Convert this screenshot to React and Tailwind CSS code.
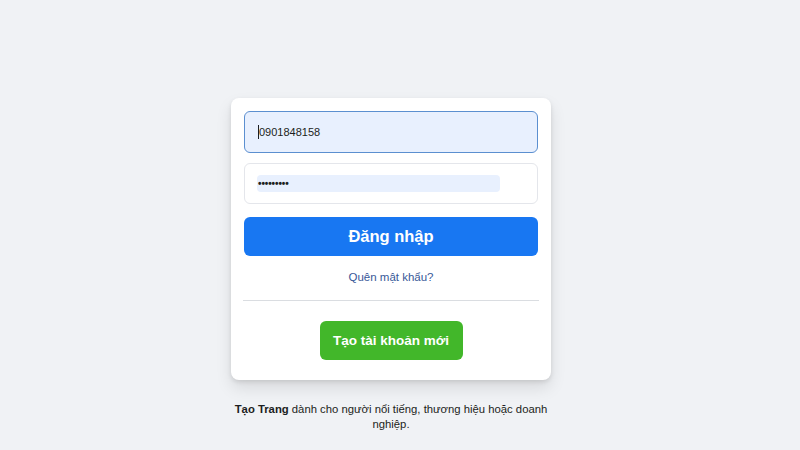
export default function App() {
  return (
    <div
      className="w-[800px] h-[450px] bg-[#f0f2f5] flex flex-col items-center pt-[98px] pr-[18px]"
      style={{ fontFamily: '"Liberation Sans", Arial, sans-serif' }}
    >
      <div className="w-[320px] bg-white rounded-[8px] shadow-[0_2px_4px_rgba(0,0,0,0.1),0_8px_16px_rgba(0,0,0,0.1)] px-[13px] pt-[13px] pb-[20px] flex flex-col">
        <div className="h-[42px] rounded-[6px] border border-[#5b8fd0] bg-[#e8f0fe] flex items-center px-[13px]">
          <span className="w-px h-[14px] bg-[#1c1e21]" />
          <span className="text-[11px] text-[#1c1e21]">0901848158</span>
        </div>
        <div className="mt-[10px] h-[41px] rounded-[6px] border border-[#e4e6eb] bg-white flex items-center px-[12px]">
          <div className="w-[243px] h-[17px] rounded-[4px] bg-[#e8f0fe] flex items-center px-[1px]">
            <span className="text-[10px] font-bold tracking-[-0.1px] text-[#1c1e21] leading-none">•••••••••</span>
          </div>
        </div>
        <div className="mt-[13px] h-[39px] rounded-[6px] bg-[#1877f2] flex items-center justify-center">
          <span className="text-white text-[16.5px] font-bold">Đăng nhập</span>
        </div>
        <div className="mt-[13px] text-center text-[11.5px] text-[#385898]">Quên mật khẩu?</div>
        <div className="mt-[14px] mx-[-1px] h-px bg-[#dadde1]" />
        <div className="mt-[20px] flex justify-center">
          <div className="w-[143px] h-[39px] rounded-[6px] bg-[#42b72a] flex items-center justify-center">
            <span className="text-white text-[13.5px] font-bold">Tạo tài khoản mới</span>
          </div>
        </div>
      </div>
      <div className="mt-[22px] w-[322px] text-center text-[11.3px] leading-[15px] text-[#1c1e21]">
        <span className="font-bold">Tạo Trang</span> dành cho người nổi tiếng, thương hiệu hoặc doanh nghiệp.
      </div>
    </div>
  );
}
